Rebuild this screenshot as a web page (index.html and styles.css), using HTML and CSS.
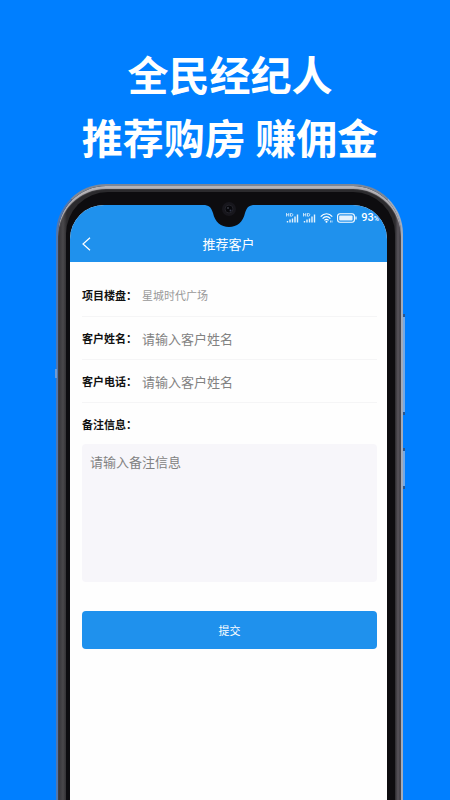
FILE: index.html
```html
<!DOCTYPE html>
<html lang="zh-CN">
<head>
  <meta charset="UTF-8">
  <meta name="viewport" content="width=device-width, initial-scale=1">
  <title>推荐客户</title>
  <link rel="stylesheet" href="styles.css">
</head>
<body>
  <h1>全民经纪人<br>推荐购房 赚佣金</h1>

  <div class="phone">
    <span class="side-key volume"></span>
    <span class="side-key power"></span>
    <span class="sim-mark"></span>
    <div class="bezel">
      <div class="screen">
        <svg class="notch" width="66" height="40" viewBox="0 0 66 40">
          <path d="M0 0V13H7C13 13 15 15 17 21C19 30 25 35 33 35S47 30 49 21C51 15 53 13 59 13H66V0Z" fill="#0d0c0f"/>
          <circle cx="33" cy="17" r="7" fill="#17161c"/>
          <circle cx="33" cy="17" r="4" fill="#08080c" stroke="#222229"/>
          <circle cx="32" cy="16" r=".8" fill="#5a5d6c"/>
          <circle cx="34.5" cy="18.5" r="1" fill="#34384a"/>
        </svg>

        <header>
          <div class="status">
            <svg width="13" height="10" viewBox="0 0 13 10">
              <path d="M.5 0v3.5M2.8 0v3.5M.5 1.8h2.3M4.5.4v2.8h.8c2 0 2-2.8 0-2.8z" fill="none" stroke="#fff" stroke-width=".7"/>
              <path d="M1.5 9.5v-1.5M4 9.5v-3M6.5 9.5v-4M9 9.5v-6M11.5 9.5v-8" stroke="#e4f2fd" stroke-width="1.4"/>
            </svg>
            <svg width="13" height="10" viewBox="0 0 13 10">
              <path d="M.5 0v3.5M2.8 0v3.5M.5 1.8h2.3M4.5.4v2.8h.8c2 0 2-2.8 0-2.8z" fill="none" stroke="#fff" stroke-width=".7"/>
              <path d="M1.5 9.5v-1.5M4 9.5v-3M6.5 9.5v-4M9 9.5v-6M11.5 9.5v-8" stroke="#e4f2fd" stroke-width="1.4"/>
            </svg>
            <svg width="13" height="10" viewBox="0 0 13 10">
              <path d="M.7 3.6C4-.2 9-.2 12.3 3.6M2.6 5.6c2.4-2.6 5.4-2.6 7.8 0M4.4 7.4c1.4-1.4 2.8-1.4 4.2 0" fill="none" stroke="#fff" stroke-width="1.2"/>
              <circle cx="6.5" cy="8.8" r="1" fill="#fff"/>
              <path d="M10.5 7.5v2M12 7.5v2" stroke="#fff" stroke-width=".7"/>
            </svg>
            <svg width="20" height="10" viewBox="0 0 20 10">
              <rect x=".6" y=".8" width="16.8" height="8.4" rx="2.4" fill="none" stroke="#fff" stroke-width="1.1"/>
              <rect x="2.2" y="2.4" width="13.4" height="5.2" rx="1" fill="#e4f2fd"/>
              <path d="M19 3.6v2.8" stroke="#fff" stroke-width="1.2"/>
            </svg>
            <span class="percent">93<small>%</small></span>
          </div>
          <div class="navbar">
            <button class="back" type="button" aria-label="返回">
              <svg width="9" height="14" viewBox="0 0 9 14"><path d="M8 .7L1 7l7 6.3" fill="none" stroke="#fff" stroke-width="1.2"/></svg>
            </button>
            <h2>推荐客户</h2>
          </div>
        </header>

        <form>
          <div class="row">
            <label for="project">项目楼盘：</label>
            <input class="project" id="project" type="text" value="星城时代广场" readonly>
          </div>
          <div class="row">
            <label for="name">客户姓名：</label>
            <input id="name" type="text" placeholder="请输入客户姓名">
          </div>
          <div class="row">
            <label for="phone">客户电话：</label>
            <input id="phone" type="tel" placeholder="请输入客户姓名">
          </div>
          <div class="row last">
            <label for="remark">备注信息：</label>
          </div>
          <textarea id="remark" placeholder="请输入备注信息"></textarea>
          <button class="submit" type="button">提交</button>
        </form>
      </div>
    </div>
  </div>
</body>
</html>
```

FILE: styles.css
```css
* {
  box-sizing: border-box;
}
body {
  margin: 0;
  height: 100vh;
  display: flex;
  flex-direction: column;
  overflow: hidden;
  background: #007fff;
  font-family: "Noto Sans CJK SC", sans-serif;
}
h1 {
  margin: 42px 0 16px;
  padding-left: 10px;
  color: #fff;
  font-size: 41px;
  line-height: 63px;
  font-weight: 700;
  text-align: center;
}
h2 {
  margin: 0;
  font-size: 13px;
  line-height: 20px;
  font-weight: 400;
}
input, textarea, button {
  font-family: inherit;
  border: none;
  padding: 0;
  outline: none;
}

/* 手机外壳 */
.phone {
  position: relative;
  flex: 1;
  display: flex;
  margin: 0 47px 0 56px;
  padding: 6px 6px 0 8px;
  border: 2px solid #7d8797;
  border-left-color: #4f77b0;
  border-right-color: #a3abb9;
  border-bottom: none;
  border-radius: 50px 50px 0 0;
  background: linear-gradient(90deg, #333237, #4a484b 5px, #2b2a2d 9px, #2b2a2d calc(100% - 6px), #58545b calc(100% - 3px), #38363c);
  box-shadow: inset 0 3px 1px #b5b3b8;
}
.bezel {
  flex: 1;
  display: flex;
  min-width: 0;
  padding: 13px 8px 0 4px;
  border-radius: 42px 42px 0 0;
  background: #0d0c0f;
}
.screen {
  position: relative;
  flex: 1;
  min-width: 0;
  border-radius: 34px 34px 0 0;
  background: #fefefe;
}
.notch {
  position: absolute;
  top: -13px;
  left: 50%;
  margin-left: -33px;
}
.side-key {
  position: absolute;
  right: -4px;
  width: 2px;
  background: #77a9e2;
  border-top: 3px solid #28568f;
  border-bottom: 3px solid #28568f;
}
.volume {
  top: 128px;
  height: 101px;
}
.power {
  top: 262px;
  height: 41px;
}
.sim-mark {
  position: absolute;
  top: 183px;
  left: -3px;
  width: 2px;
  height: 9px;
  background: #6f9bd3;
}

/* 顶部栏 */
header {
  height: 57px;
  padding-top: 4px;
  border-radius: 34px 34px 0 0;
  background: #1f91ed;
  color: #fff;
}
.status {
  display: flex;
  justify-content: flex-end;
  align-items: center;
  gap: 4px;
  height: 18px;
  padding-right: 8px;
}
.percent {
  font-family: Roboto, sans-serif;
  font-size: 11px;
  line-height: 18px;
  font-weight: 500;
}
.percent small {
  font-size: 7px;
}
.navbar {
  display: flex;
  align-items: center;
  justify-content: center;
  position: relative;
  height: 34px;
}
.back {
  position: absolute;
  left: 12px;
  display: flex;
  background: none;
  cursor: pointer;
}

/* 表单 */
form {
  display: flex;
  flex-direction: column;
  padding: 12px 10px 0 12px;
}
.row {
  display: flex;
  align-items: center;
  height: 43px;
  border-bottom: 1px solid #f5f5f6;
}
.row.last {
  height: 41px;
  border-bottom: none;
}
label {
  width: 60px;
  flex: none;
  font-size: 11px;
  font-weight: 700;
  color: #111;
}
input {
  flex: 1;
  min-width: 0;
  background: none;
  font-size: 13px;
  color: #777;
}
.project {
  font-size: 11px;
  color: #999;
}
::placeholder {
  color: #828282;
  opacity: 1;
}
textarea {
  height: 138px;
  padding: 8px;
  border-radius: 4px;
  background: #f7f6fa;
  font-size: 13px;
  line-height: 20px;
  resize: none;
}
.submit {
  height: 38px;
  margin-top: 29px;
  border-radius: 4px;
  background: #1f91ed;
  color: #fff;
  font-size: 11px;
  cursor: pointer;
}
```
